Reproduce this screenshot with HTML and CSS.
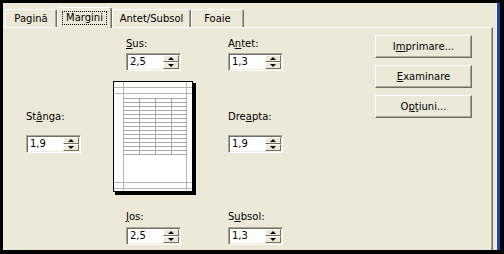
FILE: index.html
```html
<!DOCTYPE html>
<html lang="ro">
<head>
    <meta charset="UTF-8">
    <title>Iniţializare pagină</title>
    <link rel="stylesheet" href="styles.css">
</head>
<body>
    <div class="screen">
        <div class="dialog">
            <div class="tabs">
                <div class="tab tab-pagina">Pagină</div>
                <div class="tab tab-margini active"><span class="focus">Margini</span></div>
                <div class="tab tab-antet">Antet/Subsol</div>
                <div class="tab tab-foaie">Foaie</div>
            </div>

            <div class="panel">
                <div class="sheet">
                    <div class="lbl top-lbl mid"><u>S</u>us:</div>
                    <div class="spin top-spin mid">
                        <span class="val">2,5</span>
                        <span class="arrows"><i class="up"></i><i class="down"></i></span>
                    </div>

                    <div class="lbl top-lbl right">A<u>n</u>tet:</div>
                    <div class="spin top-spin right">
                        <span class="val">1,3</span>
                        <span class="arrows"><i class="up"></i><i class="down"></i></span>
                    </div>

                    <svg class="preview" width="83" height="114" viewBox="0 0 83 114">
                        <rect x="2" y="2" width="81" height="112" fill="#000"/>
                        <rect x="0.5" y="0.5" width="79" height="110" fill="#fff" stroke="#000"/>
                        <g stroke="#b4b4b4" stroke-width="1">
                            <line x1="10.5" y1="1" x2="10.5" y2="110"/>
                            <line x1="73.5" y1="1" x2="73.5" y2="110"/>
                            <line x1="1" y1="6.5" x2="79" y2="6.5"/>
                            <line x1="1" y1="12.5" x2="79" y2="12.5"/>
                            <line x1="1" y1="101.5" x2="79" y2="101.5"/>
                            <line x1="1" y1="107.5" x2="79" y2="107.5"/>
                        </g>
                        <g stroke="#a8a8a8" stroke-width="1">
                            <line x1="10" y1="17.5" x2="74" y2="17.5"/>
                            <line x1="10" y1="21.5" x2="74" y2="21.5"/>
                            <line x1="10" y1="25.5" x2="74" y2="25.5"/>
                            <line x1="10" y1="29.5" x2="74" y2="29.5"/>
                            <line x1="10" y1="33.5" x2="74" y2="33.5"/>
                            <line x1="10" y1="37.5" x2="74" y2="37.5"/>
                            <line x1="10" y1="41.5" x2="74" y2="41.5"/>
                            <line x1="10" y1="45.5" x2="74" y2="45.5"/>
                            <line x1="10" y1="49.5" x2="74" y2="49.5"/>
                            <line x1="10" y1="53.5" x2="74" y2="53.5"/>
                            <line x1="10" y1="57.5" x2="74" y2="57.5"/>
                            <line x1="10" y1="61.5" x2="74" y2="61.5"/>
                            <line x1="10" y1="65.5" x2="74" y2="65.5"/>
                            <line x1="10" y1="69.5" x2="74" y2="69.5"/>
                            <line x1="10" y1="73.5" x2="74" y2="73.5"/>
                            <line x1="26.5" y1="17" x2="26.5" y2="74"/>
                            <line x1="42.5" y1="17" x2="42.5" y2="74"/>
                            <line x1="58.5" y1="17" x2="58.5" y2="74"/>
                        </g>
                    </svg>

                    <div class="lbl side-lbl left">St<u>â</u>nga:</div>
                    <div class="spin side-spin left">
                        <span class="val">1,9</span>
                        <span class="arrows"><i class="up"></i><i class="down"></i></span>
                    </div>

                    <div class="lbl side-lbl right">Dre<u>a</u>pta:</div>
                    <div class="spin side-spin right">
                        <span class="val">1,9</span>
                        <span class="arrows"><i class="up"></i><i class="down"></i></span>
                    </div>

                    <div class="lbl bottom-lbl mid"><u>J</u>os:</div>
                    <div class="spin bottom-spin mid">
                        <span class="val">2,5</span>
                        <span class="arrows"><i class="up"></i><i class="down"></i></span>
                    </div>

                    <div class="lbl bottom-lbl right">S<u>u</u>bsol:</div>
                    <div class="spin bottom-spin right">
                        <span class="val">1,3</span>
                        <span class="arrows"><i class="up"></i><i class="down"></i></span>
                    </div>

                    <div class="buttons">
                        <button type="button" class="btn">I<u>m</u>primare...</button>
                        <button type="button" class="btn"><u>E</u>xaminare</button>
                        <button type="button" class="btn">O<u>p</u>ţiuni...</button>
                    </div>
                </div>
            </div>
        </div>
        <div class="edge"></div>
    </div>
</body>
</html>
```

FILE: styles.css
```css
body {
    margin: 0;
    background-color: #000;
    font-family: "DejaVu Sans", Verdana, sans-serif;
    font-size: 10px;
    color: #000;
}
.screen {
    display: flex;
    width: 504px;
    height: 254px;
    box-sizing: border-box;
    padding: 3px 0 0 3px;
}
.dialog {
    width: 493px;
    height: 247px;
    background-color: #ece9d8;
    display: flex;
    flex-direction: column;
}
.edge {
    width: 3px;
    height: 247px;
    border-left: 1px solid #f4f3ee;
    background-color: #1f42a6;
}

/* tabs */
.tabs {
    display: flex;
    align-items: flex-end;
    height: 24px;
    padding-left: 2px;
}
.tab {
    height: 18px;
    box-sizing: border-box;
    border: 1px solid #fff;
    border-right-color: #716f64;
    border-bottom: none;
    border-radius: 2px 2px 0 0;
    box-shadow: inset -1px 0 0 #aca899;
    display: flex;
    align-items: center;
    justify-content: center;
    line-height: 14px;
}
.tab-pagina { width: 52px; }
.tab-margini { width: 55px; }
.tab-antet { width: 79px; }
.tab-foaie { width: 53px; }
.tab.active {
    height: 21px;
    margin-bottom: -1px;
    position: relative;
    z-index: 1;
    background-color: #ece9d8;
    align-items: flex-start;
    padding-top: 3px;
}
.focus {
    border: 1px dotted #000;
    padding: 0 3px;
    line-height: 12px;
}

/* panel */
.panel {
    flex: 1;
    width: 490px;
    box-sizing: border-box;
    border-top: 1px solid #fff;
    border-right: 1px solid #716f64;
    box-shadow: inset -1px 0 0 #aca899;
    padding: 7px 0 0 23px;
}
.sheet {
    display: grid;
    grid-template-columns: 55px 32px 83px 32px 55px 92px 97px;
    grid-template-rows: 16px 30px 29px 14px 11px 18px 57px 14px 21px;
}
.lbl {
    line-height: 14px;
    white-space: nowrap;
}
.left { grid-column: 1; }
.mid { grid-column: 3; margin-left: 13px; }
.right { grid-column: 5; }
.top-lbl { grid-row: 1; align-self: end; }
.top-spin { grid-row: 2; margin-top: 2px; }
.side-lbl { grid-row: 4; }
.side-spin { grid-row: 6; }
.bottom-lbl { grid-row: 8; }
.bottom-spin { grid-row: 9; margin-top: 3px; }

/* spinner boxes */
.spin {
    display: flex;
    width: 55px;
    height: 18px;
    box-sizing: border-box;
    border: 1px solid;
    border-color: #aca899 #fff #fff #aca899;
    box-shadow: inset 1px 1px 0 #716f64, inset -1px -1px 0 #f1efe2;
    background-color: #fff;
    padding: 1px;
}
.val {
    flex: 1;
    padding-left: 2px;
    line-height: 14px;
}
.arrows {
    width: 16px;
    display: flex;
    flex-direction: column;
}
.arrows i {
    flex: 1;
    box-sizing: border-box;
    background-color: #ece9d8;
    border: 1px solid;
    border-color: #fff #716f64 #716f64 #fff;
    display: flex;
    align-items: center;
    justify-content: center;
}
.arrows .up::after {
    content: "";
    border-left: 3px solid transparent;
    border-right: 3px solid transparent;
    border-bottom: 3px solid #000;
}
.arrows .down::after {
    content: "";
    border-left: 3px solid transparent;
    border-right: 3px solid transparent;
    border-top: 3px solid #000;
}

/* page preview */
.preview {
    grid-column: 3;
    grid-row: 3 / 8;
    display: block;
}

/* buttons */
.buttons {
    grid-column: 7;
    grid-row: 1 / 5;
    display: flex;
    flex-direction: column;
    gap: 7px;
}
.btn {
    height: 23px;
    box-sizing: border-box;
    margin: 0;
    padding: 0;
    font: inherit;
    color: #000;
    background-color: #ece9d8;
    border: 1px solid;
    border-color: #fff #716f64 #716f64 #fff;
    box-shadow: inset -1px -1px 0 #aca899;
}
```
